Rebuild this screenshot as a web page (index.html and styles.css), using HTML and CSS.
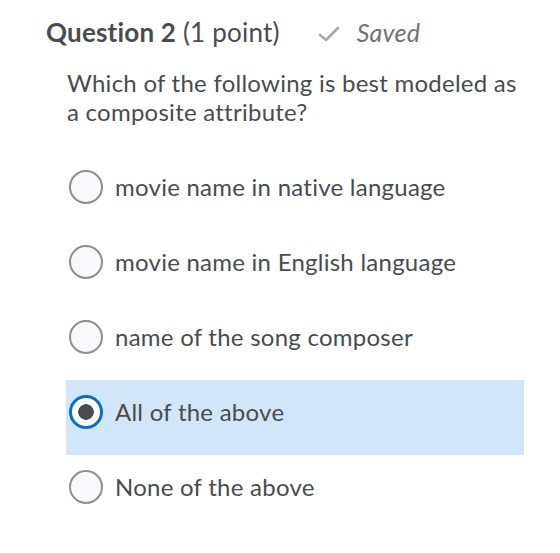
FILE: index.html
```html
<!DOCTYPE html>
<html lang="en">
<head>
    <meta charset="UTF-8">
    <title>Question 2</title>
    <link rel="stylesheet" href="styles.css">
</head>
<body>
    <div class="quiz">
        <div class="q-header">
            <h2><strong>Question 2</strong> (1 point)</h2>
            <span class="saved">
                <svg class="check" width="22" height="16" viewBox="0 0 22 16">
                    <path d="M2 9 L8 14 L20 2" fill="none" stroke="#a3a8ac" stroke-width="2.6" stroke-linecap="round" stroke-linejoin="round"/>
                </svg>
                Saved
            </span>
        </div>
        <p class="q-text">Which of the following is best modeled as a composite attribute?</p>
        <div class="options">
            <label class="option"><span class="radio"></span><span class="opt-text">movie name in native language</span></label>
            <label class="option"><span class="radio"></span><span class="opt-text">movie name in English language</span></label>
            <label class="option"><span class="radio"></span><span class="opt-text">name of the song composer</span></label>
            <label class="option selected"><span class="radio"></span><span class="opt-text">All of the above</span></label>
            <label class="option"><span class="radio"></span><span class="opt-text">None of the above</span></label>
        </div>
    </div>
</body>
</html>
```

FILE: styles.css
```css
body {
    margin: 0;
    background: #fff;
    font-family: Lato, "Open Sans", sans-serif;
    color: #494c4e;
    letter-spacing: 0.25px;
}
.quiz {
    padding: 15px 0 0 46px;
    width: 478px;
}
.q-header {
    display: flex;
    align-items: baseline;
}
h2 {
    margin: 0;
    font-size: 26px;
    font-weight: 400;
    line-height: 34px;
    letter-spacing: 0.2px;
}
h2 strong {
    font-weight: 700;
}
.saved {
    margin-left: 38px;
    font-size: 25px;
    font-style: italic;
    color: #6e7376;
}
.check {
    margin-right: 11px;
    vertical-align: 0;
}
.q-text {
    margin: 19px 0 0 21px;
    font-size: 24px;
    line-height: 29px;
}
.options {
    margin: 29px 0 0 20px;
}
.option {
    display: flex;
    align-items: center;
    height: 75px;
    box-sizing: border-box;
    padding: 0 4px 12px 3px;
    font-size: 24px;
}
.option.selected {
    background: #d1e6f9;
}
.radio {
    width: 34px;
    height: 34px;
    box-sizing: border-box;
    border: 2px solid #8c8f92;
    border-radius: 50%;
    background: #f9f9fc;
    margin-right: 12px;
    flex: none;
}
.selected .radio {
    border: 3px solid #0b6fbe;
    background: #f9f9fc radial-gradient(circle, #494c4e 0 7.5px, transparent 8px);
}
```
